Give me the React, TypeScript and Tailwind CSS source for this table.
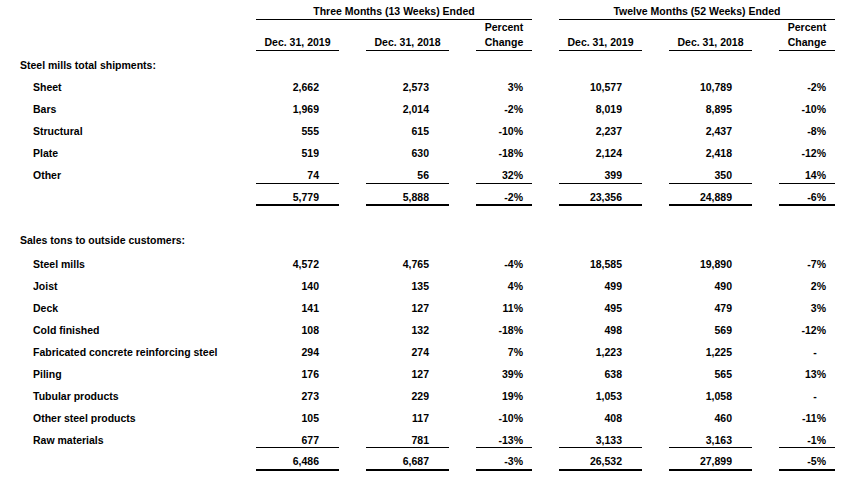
import React from "react";

const GRID = "grid grid-cols-[229px_83px_83px_56px_83px_83px_56px] gap-x-[27px]";

type Row = { label: string; v: string[] };

const group1: Row[] = [
  { label: "Sheet", v: ["2,662", "2,573", "3%", "10,577", "10,789", "-2%"] },
  { label: "Bars", v: ["1,969", "2,014", "-2%", "8,019", "8,895", "-10%"] },
  { label: "Structural", v: ["555", "615", "-10%", "2,237", "2,437", "-8%"] },
  { label: "Plate", v: ["519", "630", "-18%", "2,124", "2,418", "-12%"] },
];
const other1: Row = { label: "Other", v: ["74", "56", "32%", "399", "350", "14%"] };
const total1 = ["5,779", "5,888", "-2%", "23,356", "24,889", "-6%"];

const group2: Row[] = [
  { label: "Steel mills", v: ["4,572", "4,765", "-4%", "18,585", "19,890", "-7%"] },
  { label: "Joist", v: ["140", "135", "4%", "499", "490", "2%"] },
  { label: "Deck", v: ["141", "127", "11%", "495", "479", "3%"] },
  { label: "Cold finished", v: ["108", "132", "-18%", "498", "569", "-12%"] },
  { label: "Fabricated concrete reinforcing steel", v: ["294", "274", "7%", "1,223", "1,225", "-"] },
  { label: "Piling", v: ["176", "127", "39%", "638", "565", "13%"] },
  { label: "Tubular products", v: ["273", "229", "19%", "1,053", "1,058", "-"] },
  { label: "Other steel products", v: ["105", "117", "-10%", "408", "460", "-11%"] },
];
const raw2: Row = { label: "Raw materials", v: ["677", "781", "-13%", "3,133", "3,163", "-1%"] };
const total2 = ["6,486", "6,687", "-3%", "26,532", "27,899", "-5%"];

function Val({ s, i, extra = "" }: { s: string; i: number; extra?: string }) {
  const pct = i === 2 || i === 5;
  return (
    <div className={`text-right ${pct ? "pr-[9px]" : "pr-[20px]"} ${extra}`}>
      {s === "-" ? (
        <>
          -<span className="invisible">%</span>
        </>
      ) : (
        s
      )}
    </div>
  );
}

function DataRow({ r }: { r: Row }) {
  return (
    <div className={`${GRID} h-[22px] leading-[22px]`}>
      <div className="pl-[33px] whitespace-nowrap">{r.label}</div>
      {r.v.map((s, i) => (
        <Val key={i} s={s} i={i} />
      ))}
    </div>
  );
}

function LastRow({ r, h }: { r: Row; h: string }) {
  return (
    <div className={`${GRID} ${h} leading-[12px]`}>
      <div className="pl-[33px] pt-[5px] whitespace-nowrap">{r.label}</div>
      {r.v.map((s, i) => (
        <Val key={i} s={s} i={i} extra="pt-[5px] border-b border-black" />
      ))}
    </div>
  );
}

function TotalRow({ v, h }: { v: string[]; h: string }) {
  return (
    <div className={`${GRID} ${h} leading-[12px]`}>
      <div />
      {v.map((s, i) => (
        <Val key={i} s={s} i={i} extra="pt-[7px] border-b-2 border-black" />
      ))}
    </div>
  );
}

export default function App() {
  return (
    <div
      className="w-[846px] h-[477px] bg-white text-black font-bold text-[10.5px] overflow-hidden"
      style={{ fontFamily: '"Liberation Sans", Arial, sans-serif' }}
    >
      {/* group headers */}
      <div className={`${GRID} h-[20px] leading-[12px]`}>
        <div />
        <div className="col-span-3 border-b border-black flex items-end justify-center pb-[2px] whitespace-nowrap">
          Three Months (13 Weeks) Ended
        </div>
        <div className="col-span-3 border-b border-black flex items-end justify-center pb-[2px] whitespace-nowrap">
          Twelve Months (52 Weeks) Ended
        </div>
      </div>
      {/* sub headers */}
      <div className={`${GRID} h-[31px] leading-[15px]`}>
        <div />
        {["Dec. 31, 2019", "Dec. 31, 2018", "Percent|Change", "Dec. 31, 2019", "Dec. 31, 2018", "Percent|Change"].map(
          (t, i) => (
            <div key={i} className="border-b border-black flex flex-col items-center justify-end text-center whitespace-nowrap">
              {t.split("|").map((p, j) => (
                <div key={j}>{p}</div>
              ))}
            </div>
          )
        )}
      </div>
      {/* section 1 */}
      <div className="h-[25px] pt-[8px] pl-[20px] leading-[12px]">Steel mills total shipments:</div>
      {group1.map((r) => (
        <DataRow key={r.label} r={r} />
      ))}
      <LastRow r={other1} h="h-[20px]" />
      <TotalRow v={total1} h="h-[22px]" />
      {/* section 2 */}
      <div className="h-[47px] pt-[28px] pl-[20px] leading-[12px]">Sales tons to outside customers:</div>
      {group2.map((r) => (
        <DataRow key={r.label} r={r} />
      ))}
      <LastRow r={raw2} h="h-[19px]" />
      <TotalRow v={total2} h="h-[23px]" />
    </div>
  );
}
